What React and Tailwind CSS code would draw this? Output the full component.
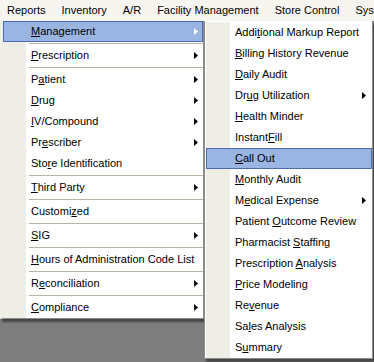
import React from 'react';

const topItems = ['Reports', 'Inventory', 'A/R', 'Facility Management', 'Store Control', 'System'];

// [before, key, after, hasSub, sepAfter]
const mainItems = [
  ['', 'M', 'anagement', true, true],
  ['', 'P', 'rescription', true, true],
  ['P', 'a', 'tient', true, false],
  ['', 'D', 'rug', true, false],
  ['', 'I', 'V/Compound', true, false],
  ['Pr', 'e', 'scriber', true, false],
  ['Sto', 'r', 'e Identification', false, true],
  ['', 'T', 'hird Party', true, true],
  ['Customi', 'z', 'ed', false, true],
  ['', 'S', 'IG', true, true],
  ['', 'H', 'ours of Administration Code List', false, true],
  ['R', 'e', 'conciliation', true, true],
  ['', 'C', 'ompliance', true, false],
];

const subItems = [
  ['Addi', 't', 'ional Markup Report', false],
  ['', 'B', 'illing History Revenue', false],
  ['', 'D', 'aily Audit', false],
  ['Dr', 'u', 'g Utilization', true],
  ['', 'H', 'ealth Minder', false],
  ['Instant', 'F', 'ill', false],
  ['', 'C', 'all Out', false],
  ['', 'M', 'onthly Audit', false],
  ['M', 'e', 'dical Expense', true],
  ['Patient ', 'O', 'utcome Review', false],
  ['Pharmacist ', 'S', 'taffing', false],
  ['Prescription ', 'A', 'nalysis', false],
  ['', 'P', 'rice Modeling', false],
  ['Re', 'v', 'enue', false],
  ['Sa', 'l', 'es Analysis', false],
  ['S', 'u', 'mmary', false],
];

function Arrow({ white }) {
  return (
    <svg width="4" height="7" viewBox="0 0 4 7" className="shrink-0">
      <path d="M0 0L4 3.5L0 7Z" fill={white ? '#ffffff' : '#000000'} />
    </svg>
  );
}

function Row({ item, active, gutter, pr }) {
  const [a, k, b, sub] = item;
  if (active) {
    return (
      <div className="h-[21px] flex items-center bg-[#9bb5e3] border border-[#4a6cb3]">
        <div style={{ width: gutter - 1 }} className="shrink-0" />
        <span className="flex-1 whitespace-nowrap pl-[5px]">
          {a}<u className="underline-offset-1">{k}</u>{b}
        </span>
        {sub && <Arrow white />}
        <div style={{ width: pr - 1 }} className="shrink-0" />
      </div>
    );
  }
  return (
    <div className="h-[21px] flex items-center">
      <div style={{ width: gutter }} className="self-stretch shrink-0 bg-[#efeee6]" />
      <span className="flex-1 whitespace-nowrap pl-[5px]">
        {a}<u className="underline-offset-1">{k}</u>{b}
      </span>
      {sub && <Arrow />}
      <div style={{ width: pr }} className="shrink-0" />
    </div>
  );
}

function Sep({ gutter }) {
  return (
    <div className="h-[3px] flex">
      <div style={{ width: gutter }} className="shrink-0 bg-[#efeee6]" />
      <div className="flex-1 flex items-center pl-[3px]">
        <div className="h-px w-full bg-[#b8b5a6]" />
      </div>
    </div>
  );
}

export default function App() {
  return (
    <div
      className="w-[374px] h-[362px] bg-[#7e7e7e] overflow-hidden text-[11px] text-black flex flex-col"
      style={{ fontFamily: '"Liberation Sans", Arial, sans-serif' }}
    >
      <div className="h-[21px] shrink-0 bg-[#f6f5f0] flex items-center gap-[16px] pl-[7px] whitespace-nowrap overflow-hidden">
        {topItems.map((t) => (
          <span key={t}>{t}</span>
        ))}
      </div>
      <div className="flex items-start">
        <div className="w-[204px] shrink-0 bg-white border-r border-b border-[#8c8c8c] border-l-[3px] border-l-[#efeee6] shadow-[2px_3px_2px_rgba(0,0,0,0.45)] flex flex-col">
          {mainItems.map((it, i) => (
            <React.Fragment key={i}>
              <Row item={it} active={i === 0} gutter={23} pr={5} />
              {it[4] && <Sep gutter={23} />}
            </React.Fragment>
          ))}
        </div>
        <div className="w-[169px] shrink-0 bg-white border border-[#8c8c8c] border-t-0 shadow-[2px_3px_2px_rgba(0,0,0,0.45)] flex flex-col pt-px pl-[1px]">
          {subItems.map((it, i) => (
            <Row key={i} item={it} active={i === 6} gutter={24} pr={6} />
          ))}
        </div>
      </div>
    </div>
  );
}
